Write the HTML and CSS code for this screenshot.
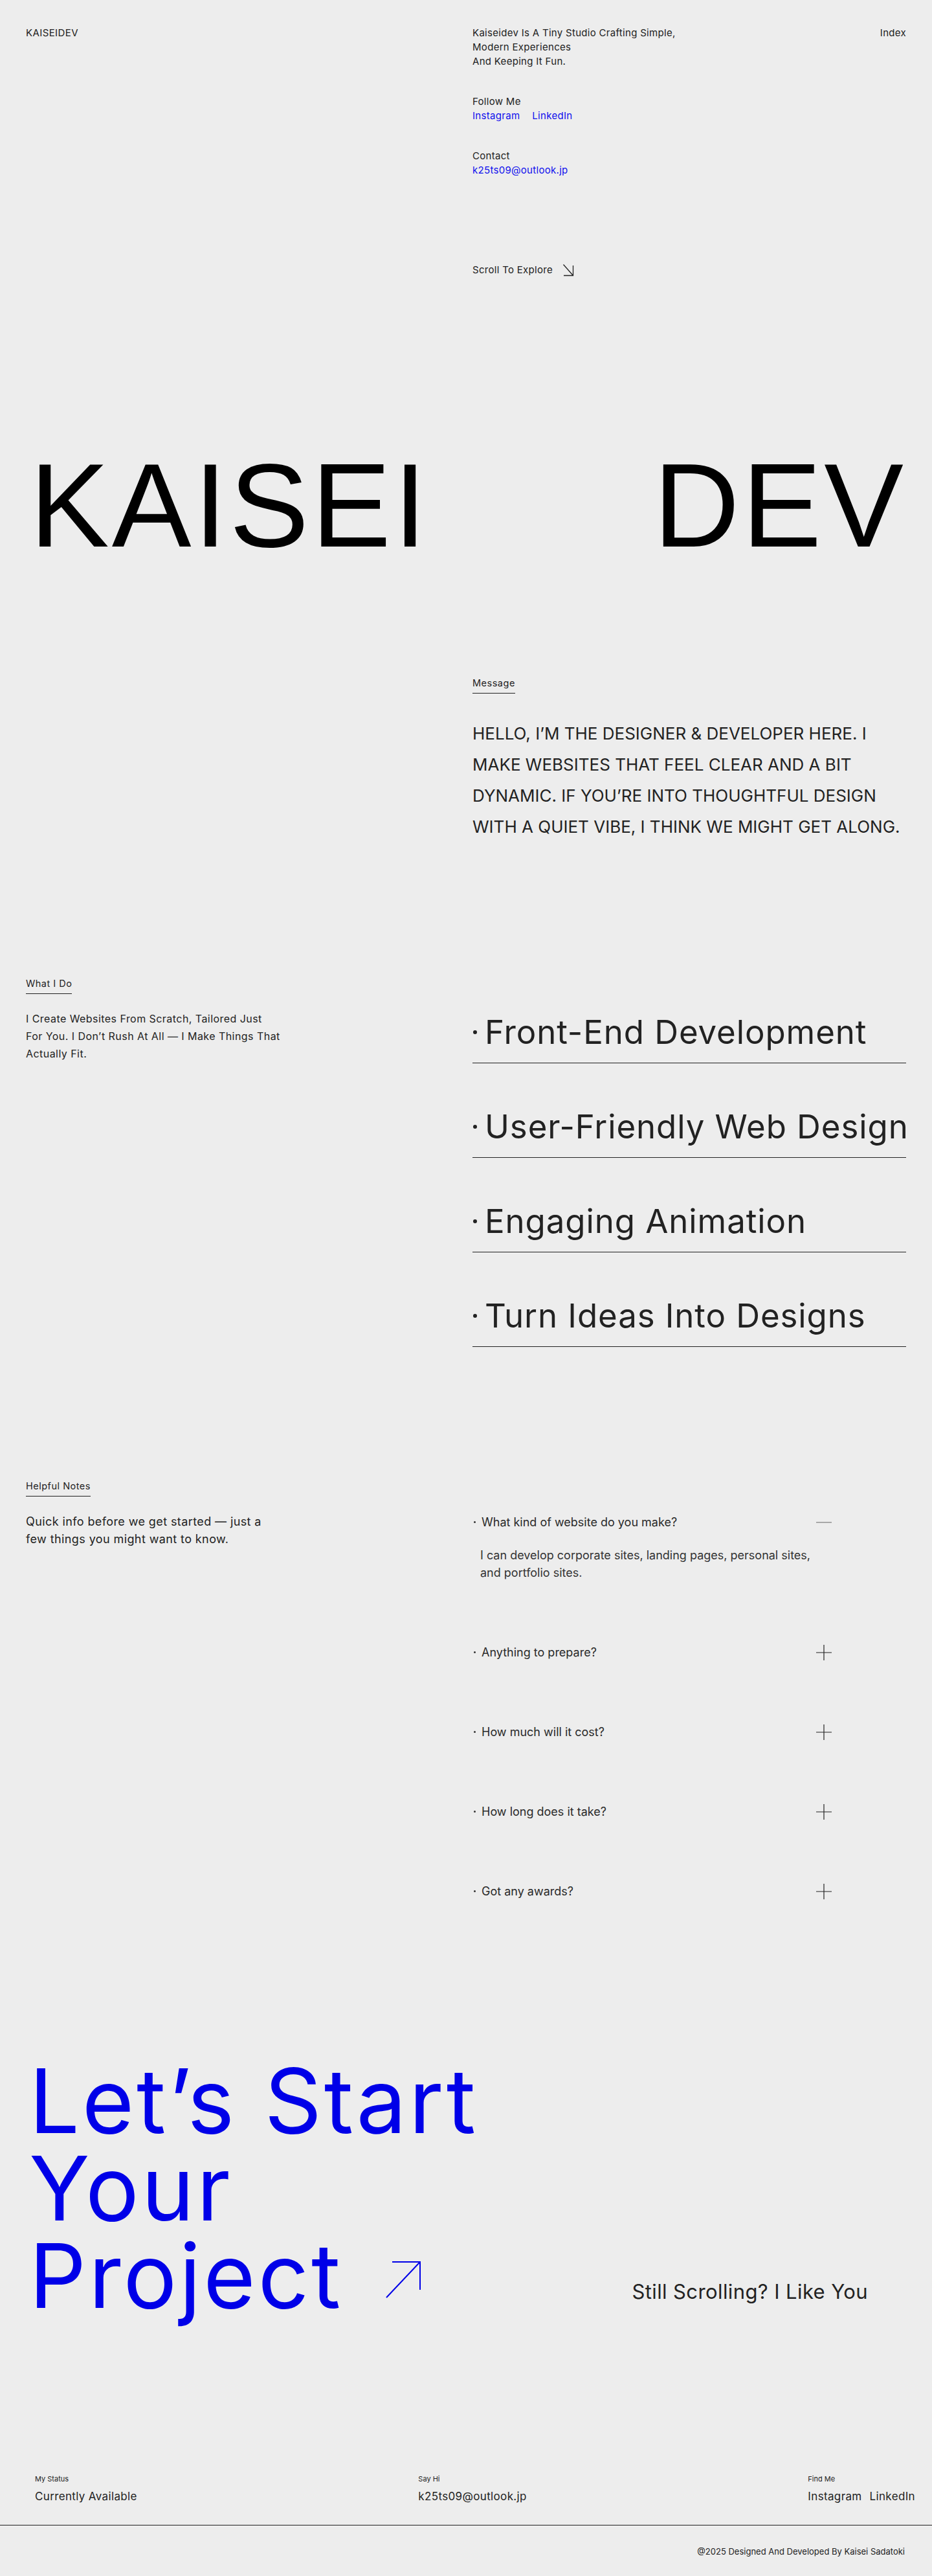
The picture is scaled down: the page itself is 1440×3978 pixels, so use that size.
FILE: index.html
```html
<!DOCTYPE html>
<html lang="en">
<head>
<meta charset="utf-8">
<title>KAISEIDEV</title>
<link rel="stylesheet" href="styles.css">
</head>
<body>
<header class="hero">
  <div class="hero-top">
    <a class="logo" href="#">KAISEIDEV</a>
    <div class="hero-right">
      <div class="hero-info">
        <p class="intro">Kaiseidev Is A Tiny Studio Crafting Simple,<br>Modern Experiences<br>And Keeping It Fun.</p>
        <div class="info-block">
          <p>Follow Me</p>
          <p class="links"><a class="blue" href="#">Instagram</a><a class="blue" href="#">LinkedIn</a></p>
        </div>
        <div class="info-block">
          <p>Contact</p>
          <a class="blue" href="#">k25ts09@outlook.jp</a>
        </div>
        <p class="scroll"><span>Scroll To Explore</span><svg class="scroll-arrow" viewBox="0 0 18 20" width="18" height="20"><path d="M1.5 1.5 L16.5 18.5 M2 18.5 H16.5 V3" fill="none" stroke="#222" stroke-width="1.3"/></svg></p>
      </div>
      <a class="index" href="#">Index</a>
    </div>
  </div>
  <h1 class="title"><span>KAISEI</span><span>DEV</span></h1>
</header>

<section class="section message">
  <div class="stack col-2">
    <h2 class="label">Message</h2>
    <p class="message-text">HELLO, I’M THE DESIGNER &amp; DEVELOPER HERE. I<br>MAKE WEBSITES THAT FEEL CLEAR AND A BIT<br>DYNAMIC. IF YOU’RE INTO THOUGHTFUL DESIGN<br>WITH A QUIET VIBE, I THINK WE MIGHT GET ALONG.</p>
  </div>
</section>

<section class="section services-sec">
  <div class="stack">
    <h2 class="label">What I Do</h2>
    <p class="side-text side-do">I Create Websites From Scratch, Tailored Just<br>For You. I Don’t Rush At All — I Make Things That<br>Actually Fit.</p>
  </div>
  <ul class="services">
    <li><span class="dot"></span><span class="svc">Front-End Development</span></li>
    <li><span class="dot"></span><span class="svc">User-Friendly Web Design</span></li>
    <li><span class="dot"></span><span class="svc">Engaging Animation</span></li>
    <li><span class="dot"></span><span class="svc">Turn Ideas Into Designs</span></li>
  </ul>
</section>

<section class="section faq-sec">
  <div class="stack">
    <h2 class="label">Helpful Notes</h2>
    <p class="side-text side-help">Quick info before we get started — just a<br>few things you might want to know.</p>
  </div>
  <div class="faq">
    <div class="faq-item">
      <div class="faq-q"><span class="sdot"></span><span class="q">What kind of website do you make?</span><svg class="icon" viewBox="0 0 24 24"><path d="M0 12H24" stroke="#8c8c8c" stroke-width="1.4"/></svg></div>
      <p class="faq-a">I can develop corporate sites, landing pages, personal sites,<br>and portfolio sites.</p>
    </div>
    <div class="faq-item">
      <div class="faq-q"><span class="sdot"></span><span class="q">Anything to prepare?</span><svg class="icon" viewBox="0 0 24 24"><path d="M0 12H24M12 0V24" stroke="#222" stroke-width="1.2"/></svg></div>
    </div>
    <div class="faq-item">
      <div class="faq-q"><span class="sdot"></span><span class="q">How much will it cost?</span><svg class="icon" viewBox="0 0 24 24"><path d="M0 12H24M12 0V24" stroke="#222" stroke-width="1.2"/></svg></div>
    </div>
    <div class="faq-item">
      <div class="faq-q"><span class="sdot"></span><span class="q">How long does it take?</span><svg class="icon" viewBox="0 0 24 24"><path d="M0 12H24M12 0V24" stroke="#222" stroke-width="1.2"/></svg></div>
    </div>
    <div class="faq-item">
      <div class="faq-q"><span class="sdot"></span><span class="q">Got any awards?</span><svg class="icon" viewBox="0 0 24 24"><path d="M0 12H24M12 0V24" stroke="#222" stroke-width="1.2"/></svg></div>
    </div>
  </div>
</section>

<section class="cta">
  <h2 class="cta-title">Let’s Start<br>Your<br>Project<svg class="cta-arrow" viewBox="0 0 56 60" width="56" height="60"><path d="M2 58 L54 3 M11 3 H54 V46" fill="none" stroke="#0000e8" stroke-width="2"/></svg></h2>
  <p class="still">Still Scrolling? I Like You</p>
</section>

<footer class="footer">
  <div class="footer-top">
    <div class="fcol"><p class="flabel">My Status</p><p class="fval">Currently Available</p></div>
    <div class="fcol"><p class="flabel">Say Hi</p><a class="fval" href="#">k25ts09@outlook.jp</a></div>
    <div class="fcol"><p class="flabel">Find Me</p><p class="fval flinks"><a href="#">Instagram</a><a href="#">LinkedIn</a></p></div>
  </div>
  <div class="footer-bottom"><p>@2025 Designed And Developed By Kaisei Sadatoki</p></div>
</footer>
</body>
</html>
```

FILE: styles.css
```css
* { box-sizing: border-box; margin: 0; padding: 0; }
html, body { background: #ededed; }
body { color: #222; font-family: "Inter", "Noto Sans", sans-serif; font-weight: 400; }
a { color: inherit; text-decoration: none; }
ul { list-style: none; }
.blue { color: #1010ee; }

.hero { padding: 40px 40px 0; }
.hero-top { display: grid; grid-template-columns: 670px 670px; column-gap: 20px; align-items: start; }
.logo { font-size: 15px; line-height: 22px; letter-spacing: 0.4px; }
.hero-right { display: flex; justify-content: space-between; align-items: flex-start; font-size: 15px; line-height: 22px; letter-spacing: 0.3px; }
.info-block { margin-top: 40px; }
.links { display: flex; gap: 19px; }
.scroll { margin-top: 132px; display: flex; align-items: center; gap: 15px; }
.scroll-arrow { display: block; }
.title { margin-top: 260px; padding-left: 6px; display: flex; justify-content: space-between; font-family: "Liberation Sans", Arial, sans-serif; font-weight: 400; font-size: 184px; line-height: 184px; letter-spacing: 4px; color: #000; }

.section { display: grid; grid-template-columns: 670px 670px; column-gap: 20px; padding: 0 40px; align-items: start; }
.col-2 { grid-column: 2; }
.stack { display: flex; flex-direction: column; align-items: flex-start; }
.label { font-size: 14.5px; line-height: 20px; padding-bottom: 5px; border-bottom: 1px solid #222; font-weight: 400; letter-spacing: 0.5px; }
.message { margin-top: 173px; }
.message-text { margin-top: 38px; font-size: 26px; line-height: 48px; }

.services-sec { margin-top: 208px; }
.side-text { margin-top: 25px; font-size: 16px; line-height: 27px; }
.side-do { letter-spacing: 0.45px; }
.side-help { font-size: 18px; letter-spacing: 0.4px; }
.services { padding-top: 55px; display: flex; flex-direction: column; gap: 68px; }
.services li { display: flex; align-items: center; font-size: 51px; line-height: 60px; letter-spacing: 0.9px; padding-bottom: 17px; border-bottom: 1px solid #222; }
.services .svc { white-space: nowrap; }
.services .dot { flex: none; width: 6px; height: 6px; border-radius: 50%; background: #222; margin: 0 12px 0 1px; }

.faq-sec { margin-top: 205px; }
.faq { margin-top: 4px; width: 555px; }
.faq-item { padding: 48px 0; }
.faq-q { display: flex; align-items: center; font-size: 18px; line-height: 27px; color: #2a2a2a; }
.faq-q .sdot { flex: none; width: 3px; height: 3px; border-radius: 50%; background: #333; margin: 0 9px 0 2px; }
.faq-q .q { flex: 1; }
.icon { flex: none; width: 24px; height: 24px; display: block; }
.faq-a { margin-top: 24px; padding-left: 12px; font-size: 18px; line-height: 27px; color: #333; }

.cta { margin-top: 194px; padding: 0 40px 0 45px; display: flex; justify-content: space-between; align-items: flex-end; }
.cta-title { font-size: 138px; line-height: 135px; font-weight: 400; color: #0000e8; letter-spacing: 3.8px; }
.cta-arrow { margin-left: 65px; vertical-align: 14px; }
.still { font-size: 31px; line-height: 40px; letter-spacing: 0.4px; margin: 0 59px 22px 0; color: #222; }

.footer { margin-top: 239px; }
.footer-top { display: flex; justify-content: space-between; padding: 0 26px 0 54px; }
.fcol { display: flex; flex-direction: column; gap: 7px; }
.flabel { font-size: 11px; line-height: 16px; }
.fval { font-size: 17px; line-height: 24px; letter-spacing: 0.35px; }
.flinks { display: flex; gap: 12px; }
.footer-bottom { margin-top: 32px; border-top: 1px solid #222; padding: 31px 42px 29px; text-align: right; font-size: 13px; line-height: 18px; }
```
